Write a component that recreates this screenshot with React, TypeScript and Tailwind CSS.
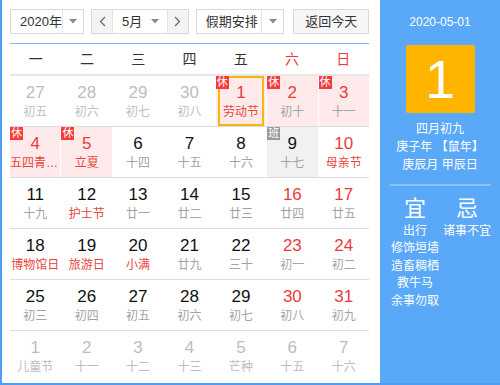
import React from "react";

type Day = {
  n: number;
  sub: string;
  muted?: boolean;
  redNum?: boolean;
  redSub?: boolean;
  tag?: "休" | "班";
  selected?: boolean;
};

const weeks: Day[][] = [
  [
    { n: 27, sub: "初五", muted: true },
    { n: 28, sub: "初六", muted: true },
    { n: 29, sub: "初七", muted: true },
    { n: 30, sub: "初八", muted: true },
    { n: 1, sub: "劳动节", redNum: true, redSub: true, tag: "休", selected: true },
    { n: 2, sub: "初十", redNum: true, tag: "休" },
    { n: 3, sub: "十一", redNum: true, tag: "休" },
  ],
  [
    { n: 4, sub: "五四青年节", redNum: true, redSub: true, tag: "休" },
    { n: 5, sub: "立夏", redNum: true, redSub: true, tag: "休" },
    { n: 6, sub: "十四" },
    { n: 7, sub: "十五" },
    { n: 8, sub: "十六" },
    { n: 9, sub: "十七", tag: "班" },
    { n: 10, sub: "母亲节", redNum: true, redSub: true },
  ],
  [
    { n: 11, sub: "十九" },
    { n: 12, sub: "护士节", redSub: true },
    { n: 13, sub: "廿一" },
    { n: 14, sub: "廿二" },
    { n: 15, sub: "廿三" },
    { n: 16, sub: "廿四", redNum: true },
    { n: 17, sub: "廿五", redNum: true },
  ],
  [
    { n: 18, sub: "博物馆日", redSub: true },
    { n: 19, sub: "旅游日", redSub: true },
    { n: 20, sub: "小满", redSub: true },
    { n: 21, sub: "廿九" },
    { n: 22, sub: "三十" },
    { n: 23, sub: "初一", redNum: true },
    { n: 24, sub: "初二", redNum: true },
  ],
  [
    { n: 25, sub: "初三" },
    { n: 26, sub: "初四" },
    { n: 27, sub: "初五" },
    { n: 28, sub: "初六" },
    { n: 29, sub: "初七" },
    { n: 30, sub: "初八", redNum: true },
    { n: 31, sub: "初九", redNum: true },
  ],
  [
    { n: 1, sub: "儿童节", muted: true },
    { n: 2, sub: "十一", muted: true },
    { n: 3, sub: "十二", muted: true },
    { n: 4, sub: "十三", muted: true },
    { n: 5, sub: "芒种", muted: true },
    { n: 6, sub: "十五", muted: true },
    { n: 7, sub: "十六", muted: true },
  ],
];

const weekdays = ["一", "二", "三", "四", "五", "六", "日"];

function Caret() {
  return (
    <svg width="8" height="5" viewBox="0 0 8 5">
      <path d="M0 0 L8 0 L4 4.5 Z" fill="#8a8a8a" />
    </svg>
  );
}

function Chevron({ dir }: { dir: "l" | "r" }) {
  return (
    <svg width="7" height="11" viewBox="0 0 7 11">
      <polyline
        points={dir === "l" ? "6,1 1.5,5.5 6,10" : "1,1 5.5,5.5 1,10"}
        fill="none"
        stroke="#666"
        strokeWidth="1.2"
      />
    </svg>
  );
}

function Cell({ d }: { d: Day }) {
  let bg = "bg-white";
  if (d.tag === "休") bg = "bg-[#feeaea]";
  if (d.tag === "班") bg = "bg-[#f1f1f1]";

  let numColor = "text-[#111]";
  if (d.redNum) numColor = "text-[#ea3b3b]";
  if (d.muted) numColor = "text-[#bdbdbd]";

  let subColor = "text-[#a3a3a3]";
  if (d.redSub) subColor = "text-[#e8453c]";
  if (d.muted) subColor = "text-[#bdbdbd]";

  return (
    <div className={`relative h-[50px] ${bg} flex flex-col items-center`}>
      {d.selected && (
        <div className="absolute inset-x-[2px] inset-y-0 border-2 border-[#f8b50b]" />
      )}
      {d.tag && (
        <span
          className={`absolute left-0 top-0 w-[13px] h-[13px] text-[11px] leading-[13px] text-white text-center ${
            d.tag === "休" ? "bg-[#f53c3c]" : "bg-[#9a9a9a]"
          }`}
        >
          {d.tag}
        </span>
      )}
      <span className={`pt-[7px] text-[17px] leading-[20px] ${numColor}`}>{d.n}</span>
      <span
        className={`mt-px w-full text-center text-[12px] leading-[16px] truncate ${subColor}`}
      >
        {d.sub}
      </span>
    </div>
  );
}

export default function App() {
  return (
    <div
      className="w-[500px] h-[385px] flex bg-white border-l-2 border-b-2 border-[#4f9ef6] overflow-hidden"
      style={{ fontFamily: '"Liberation Sans", "Noto Sans CJK SC", sans-serif' }}
    >
      {/* Calendar */}
      <div className="w-[378px] pl-[8px] pr-[11px] pt-[9px]">
        {/* Toolbar */}
        <div className="flex items-center h-[25px] text-[13px] text-[#333] whitespace-nowrap">
          <div className="w-[74px] h-[25px] flex border border-[#d9d9d9] bg-white">
            <span className="flex-1 pl-[9px] leading-[23px]">2020年</span>
            <span className="w-[22px] flex items-center justify-center border-l border-[#e3e3e3]">
              <Caret />
            </span>
          </div>
          <div className="ml-[7px] w-[98px] h-[25px] flex border border-[#d9d9d9]">
            <span className="w-[21px] flex items-center justify-center bg-[#f4f4f4] border-r border-[#e3e3e3]">
              <Chevron dir="l" />
            </span>
            <span className="flex-1 flex items-center bg-white">
              <span className="pl-[9px] flex-1 leading-[23px]">5月</span>
              <span className="pr-[8px] flex items-center">
                <Caret />
              </span>
            </span>
            <span className="w-[21px] flex items-center justify-center bg-[#f4f4f4] border-l border-[#e3e3e3]">
              <Chevron dir="r" />
            </span>
          </div>
          <div className="ml-[7px] w-[89px] h-[25px] flex border border-[#d9d9d9] bg-white">
            <span className="flex-1 pl-[9px] leading-[23px]">假期安排</span>
            <span className="w-[22px] flex items-center justify-center border-l border-[#e3e3e3]">
              <Caret />
            </span>
          </div>
          <div className="ml-[9px] w-[76px] h-[25px] border border-[#d9d9d9] bg-[#f6f6f6] text-center leading-[23px]">
            返回今天
          </div>
        </div>

        <div className="mt-[9px] h-px bg-[#84b8f1]" />

        {/* Weekday header */}
        <div className="grid grid-cols-7 h-[30px] items-center text-[14px] text-center">
          {weekdays.map((w, i) => (
            <span key={w} className={i >= 5 ? "text-[#ea3b3b]" : "text-[#333]"}>
              {w}
            </span>
          ))}
        </div>
        <div className="h-[2px] bg-[#e6e6e6]" />

        {/* Days */}
        {weeks.map((row, ri) => (
          <div
            key={ri}
            className={`grid grid-cols-7 gap-x-px ${ri < 5 ? "border-b border-[#dcdcdc]" : ""}`}
          >
            {row.map((d, ci) => (
              <Cell key={ci} d={d} />
            ))}
          </div>
        ))}
      </div>

      {/* Side panel */}
      <div className="flex-1 bg-[#5aa8f8] text-white flex flex-col items-center">
        <div className="pt-[13px] text-[12px] leading-[18px]">2020-05-01</div>
        <div className="mt-[14px] w-[69px] h-[68px] rounded-[2px] bg-[#ffb500] flex items-center justify-center text-[54px] leading-none">
          1
        </div>
        <div className="mt-[7px] text-[12px] leading-[18px] text-center">
          <div>四月初九</div>
          <div>庚子年 【鼠年】</div>
          <div>庚辰月 甲辰日</div>
        </div>
        <div className="mt-[10px] h-[2px] w-[101px] bg-[#8cc1fa]" />
        <div className="mt-[10px] w-full pl-[9px] flex">
          <div className="w-[52px] flex flex-col items-center">
            <span className="text-[22px] leading-[26px]">宜</span>
            <div className="mt-px text-[12px] leading-[17.4px] text-center">
              <div>出行</div>
              <div>修饰垣墙</div>
              <div>造畜稠栖</div>
              <div>教牛马</div>
              <div>余事勿取</div>
            </div>
          </div>
          <div className="w-[52px] flex flex-col items-center">
            <span className="text-[22px] leading-[26px]">忌</span>
            <div className="mt-px text-[12px] leading-[17.4px] text-center">
              <div>诸事不宜</div>
            </div>
          </div>
        </div>
      </div>
    </div>
  );
}
